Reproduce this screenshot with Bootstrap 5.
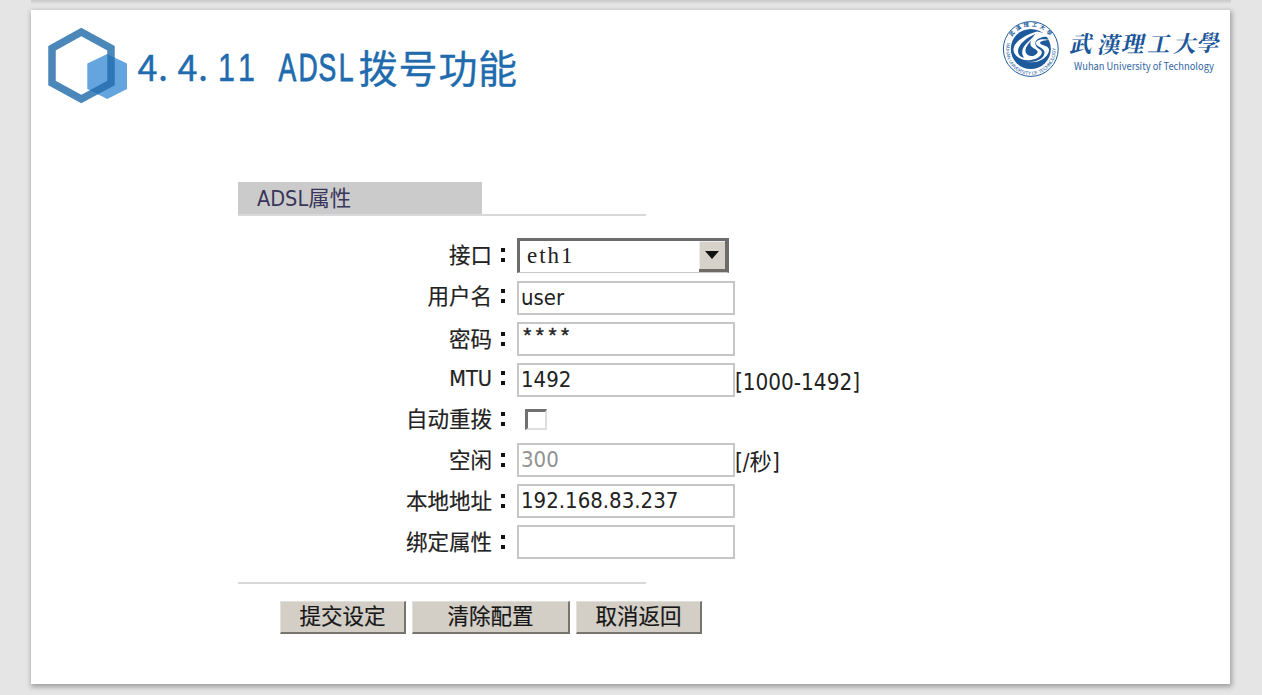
<!DOCTYPE html>
<html lang="zh-CN">
<head>
<meta charset="utf-8">
<meta name="viewport" content="width=device-width, initial-scale=1">
<title>4.4.11 ADSL拨号功能</title>
<link href="https://cdn.jsdelivr.net/npm/bootstrap@5.3.0/dist/css/bootstrap.min.css" rel="stylesheet">
<style>
body{background:#e5e5e5;height:695px;overflow:hidden;font-family:"DejaVu Sans Condensed","DejaVu Sans","Noto Sans CJK SC",sans-serif;color:#222}
.prev-slide{height:10px;margin:0 31px;background:linear-gradient(#c9c9c9,#dcdcdc 3px,#e5e5e5 4px)}
.slide{width:1199px;height:674px;margin-left:31px;box-shadow:1px 2px 5px 1px rgba(0,0,0,.3)}
.slide-head{height:172px}
.slide-head svg{display:block}
.panel{margin-left:207px;width:660px;font-size:21.5px;line-height:34px}
.tab-title{width:244px;height:32px;background:#cbcbcb;padding-left:19px;line-height:33px;color:#38355a}
.rule{width:408px;height:2px;background:#d9d9dc}
.fields{display:grid;grid-template-columns:270px 218px 1fr;column-gap:9px;grid-template-rows:43px 41px 41px 41px 39px 41px 41px 34px;align-items:start;margin-top:22px}
.fields>*{white-space:nowrap}
.lab{text-align:right;display:flex;justify-content:flex-end;padding-top:1px;-webkit-text-stroke:.2px #222}
.lab.up{padding-top:0;margin-top:-1px}
.lab i{width:16px;position:relative;font-style:normal;color:transparent;-webkit-text-stroke:0}
.lab i::after{content:"";position:absolute;right:3px;top:9px;width:4px;height:14px;background:linear-gradient(#111 4px,transparent 4px 10px,#111 10px)}
.unit{margin-left:-9px;padding-top:2px;font-size:22.3px}
.box{height:34px;border:2px solid #c6c6c6;background:#fff;padding-left:2px;line-height:30px;font-size:22px}
.dim{color:#929292}
.stars{font-family:"Liberation Mono",monospace;font-size:21px;line-height:28px;-webkit-text-stroke:.4px #222}
.pick{width:212px;height:35px;border:solid #6c6c6c;border-width:3px 2px 1px 3px;border-bottom-color:#c9c9c9;font-family:"Liberation Serif",serif;font-size:23px;letter-spacing:2px;line-height:30px;padding-left:7px}
.arrow{width:28px;height:31px;background:#d6d2ca;border:solid #6e6a66;border-width:0 2px 3px 0;box-shadow:inset 1px 1px #eee}
.arrow svg{display:block;margin:10px 0 0 6px}
.tick{width:22px;height:21px;margin:5px 0 0 8px;border:2px solid #ddd;border-top:3px solid #707070;border-left:3px solid #707070}
.acts{margin:17px 0 0 42px;gap:6px}
.key{height:33px;background:#d3cfc7;border:solid;border-width:1px 2px 2px 1px;border-color:#e3e0da #77746f #77746f #e3e0da;color:#171717;line-height:27px;border-radius:0;padding:0 0 1px;font-size:21.5px;text-align:center;-webkit-text-stroke:.2px #171717}
</style>
</head>
<body>
<div class="prev-slide"></div>
<main class="slide bg-white">
  <header class="slide-head d-flex justify-content-between">
    <svg width="520" height="110" viewBox="31 10 520 110">
      <clipPath id="smallHex"><path d="M107.300 54 127 63.500V89L107.300 99 87.300 89V63.500Z"/></clipPath>
      <path d="M81.300 32 111 48.300V83L81.300 99 52 83V48.300Z" fill="none" stroke="#4c87ba" stroke-width="7.500"/>
      <path d="M107.300 54 127 63.500V89L107.300 99 87.300 89V63.500Z" fill="#64a5e0"/>
      <path clip-path="url(#smallHex)" d="M81.300 32 111 48.300V83L81.300 99 52 83V48.300Z" fill="none" stroke="#2e76b5" stroke-width="7.500"/>
      <g fill="#206bad" stroke="#206bad">
        <g font-family="Noto Sans CJK SC,sans-serif" font-size="36" stroke-width=".3"><text y="81" x="137.500 158 177.500 198">4.4.</text></g>
        <g font-family="Liberation Sans,sans-serif" font-size="38" stroke-width=".5"><text transform="scale(.8 1)" y="81" x="272.500 297.500">11</text></g>
        <g font-family="Liberation Sans,sans-serif" font-size="38" stroke-width=".8"><text transform="scale(.7 1)" y="81" x="398 426.500 455 484">ADSL</text></g>
        <g font-family="Noto Sans CJK SC,sans-serif" font-size="39" stroke-width=".3"><text y="82.500" x="358.500 398.500 438.500 478">拨号功能</text></g>
      </g>
    </svg>
    <svg width="240" height="100" viewBox="990 10 240 100">
      <circle cx="1030.800" cy="49" r="27.400" fill="#fff" stroke="#205c9c" stroke-width="1"/>
      <circle cx="1030.800" cy="49" r="20" fill="#1d5a9c"/>
      <path d="M1037 31.500C1024 35 1013 43 1013.500 50C1014 57 1023 61.500 1031 60C1039 59 1045 53 1040 49.500C1036 47 1034 44 1036 41C1038 38 1044 36 1048 37L1044 33Z" fill="#fff"/>
      <path d="M1035 34C1026 38 1018 45 1018 51C1018 55 1021 57.500 1024 57.500C1020 52 1023 46 1029 41C1032 38 1034 36 1035 34Z" fill="#1d5a9c"/>
      <path d="M1034 38C1028 43 1024 49 1026 53C1028 57 1034 57 1037 53.500C1040 50 1033 49 1031 46C1029.500 43 1031 40 1034 38Z" fill="#1d5a9c"/>
      <path d="M1050 40C1042 38 1035 40 1036 44C1037 47 1045 48 1044.500 53C1044 59 1034 64 1024 61C1036 65 1047 59 1049 51C1050 45 1041 46 1040 43C1040 41 1045 40 1050 40Z" fill="#fff"/>
      <path id="ringLow" d="M1007.200 42.500A24.800 24.800 0 1 0 1054.400 42.500" fill="none"/>
      <path id="ringTop" d="M1012 36.800A22.400 22.400 0 0 1 1050 37" fill="none"/>
      <g font-family="Liberation Sans,sans-serif" font-size="4.800" fill="#2c649f"><text><textPath href="#ringLow" textLength="88">WUHAN UNIVERSITY OF TECHNOLOGY</textPath></text></g>
      <g font-family="Noto Sans CJK SC,sans-serif" font-size="5.300" font-weight="bold" fill="#205c9c"><text><textPath href="#ringTop" textLength="44">武漢理工大學</textPath></text></g>
      <g font-family="Noto Serif CJK SC,Noto Sans CJK SC,serif" font-weight="bold" font-size="22.500" fill="#1b5799" transform="translate(0 52) skewX(-12)">
        <text x="1069 1097 1121 1147 1173 1196" y="0 1 0 0 0 -1">武漢理工大學</text>
      </g>
      <text x="1074" y="70" font-family="Noto Sans CJK SC,sans-serif" font-size="10" fill="#3065a3" textLength="140" lengthAdjust="spacingAndGlyphs">Wuhan University of Technology</text>
    </svg>
  </header>
  <section class="panel">
    <div class="tab-title">ADSL属性</div>
    <div class="rule"></div>
    <div class="fields">
      <div class="lab">接口<i>:</i></div><div class="pick d-flex justify-content-between"><span>eth1</span><span class="arrow"><svg width="14" height="8"><path d="M0 0h14L7 8Z" fill="#111"/></svg></span></div><div></div>
      <div class="lab up">用户名<i>:</i></div><div class="box">user</div><div></div>
      <div class="lab">密码<i>:</i></div><div class="box stars">****</div><div></div>
      <div class="lab up">MTU<i>:</i></div><div class="box">1492</div><div class="unit">[1000-1492]</div>
      <div class="lab up">自动重拨<i>:</i></div><div class="tick"></div><div></div>
      <div class="lab">空闲<i>:</i></div><div class="box dim">300</div><div class="unit">[/秒]</div>
      <div class="lab">本地地址<i>:</i></div><div class="box">192.168.83.237</div><div></div>
      <div class="lab">绑定属性<i>:</i></div><div class="box"></div><div></div>
    </div>
    <div class="rule" style="margin-top:23px"></div>
    <div class="acts d-flex">
      <button class="key" style="width:126px">提交设定</button>
      <button class="key" style="width:158px">清除配置</button>
      <button class="key" style="width:126px">取消返回</button>
    </div>
  </section>
</main>
<script src="https://cdn.jsdelivr.net/npm/bootstrap@5.3.0/dist/js/bootstrap.bundle.min.js"></script>
</body>
</html>
